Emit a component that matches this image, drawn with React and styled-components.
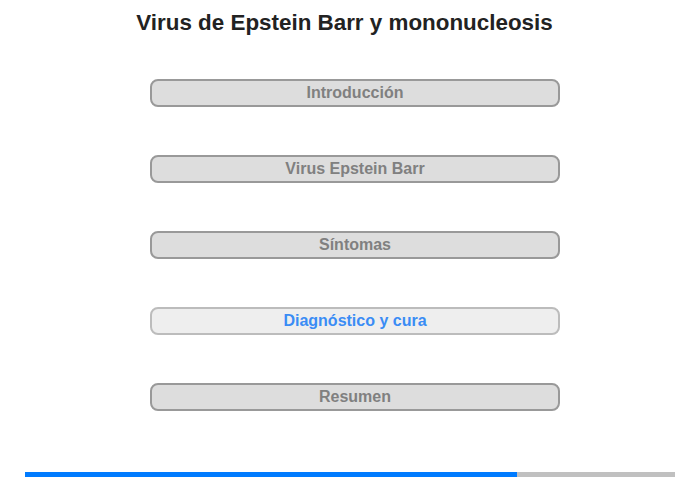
import React from "react";
import styled, { createGlobalStyle } from "styled-components";

const Global = createGlobalStyle`
  html, body { margin: 0; padding: 0; background: #fff; }
  body { font-family: "Liberation Sans", Arial, sans-serif; }
`;

const Page = styled.div`
  width: 700px;
  height: 480px;
  box-sizing: border-box;
  padding-top: 10px;
  display: flex;
  flex-direction: column;
`;

const Title = styled.h1`
  margin: 0;
  font-size: 22.4px;
  line-height: 26px;
  font-weight: bold;
  color: #222;
  text-align: center;
  padding-right: 11px;
`;

const Nav = styled.nav`
  margin-top: 43px;
  padding-left: 10px;
  display: flex;
  flex-direction: column;
  align-items: center;
  gap: 48px;
`;

const NavButton = styled.button`
  box-sizing: border-box;
  width: 410px;
  height: 28px;
  border-radius: 8px;
  border: 2px solid ${(p) => (p.$active ? "#bcbcbc" : "#999")};
  background: ${(p) => (p.$active ? "#eeeeee" : "#dddddd")};
  color: ${(p) => (p.$active ? "#3a8cf5" : "#808080")};
  font-family: "Liberation Sans", Arial, sans-serif;
  font-size: 16px;
  font-weight: bold;
  line-height: 24px;
  padding: 0;
  cursor: pointer;
`;

const Progress = styled.div`
  margin: 61px 25px 0;
  height: 5px;
  background: #c0c0c0;
  display: flex;
`;

const Fill = styled.div`
  height: 100%;
  background: #007bff;
`;

const items = [
  "Introducción",
  "Virus Epstein Barr",
  "Síntomas",
  "Diagnóstico y cura",
  "Resumen",
];

export default function App() {
  return (
    <>
      <Global />
      <Page>
        <Title>Virus de Epstein Barr y mononucleosis</Title>
        <Nav>
          {items.map((t, i) => (
            <NavButton key={t} $active={i === 3}>
              {t}
            </NavButton>
          ))}
        </Nav>
        <Progress>
          <Fill style={{ width: `${(492 / 650) * 100}%` }} />
        </Progress>
      </Page>
    </>
  );
}
